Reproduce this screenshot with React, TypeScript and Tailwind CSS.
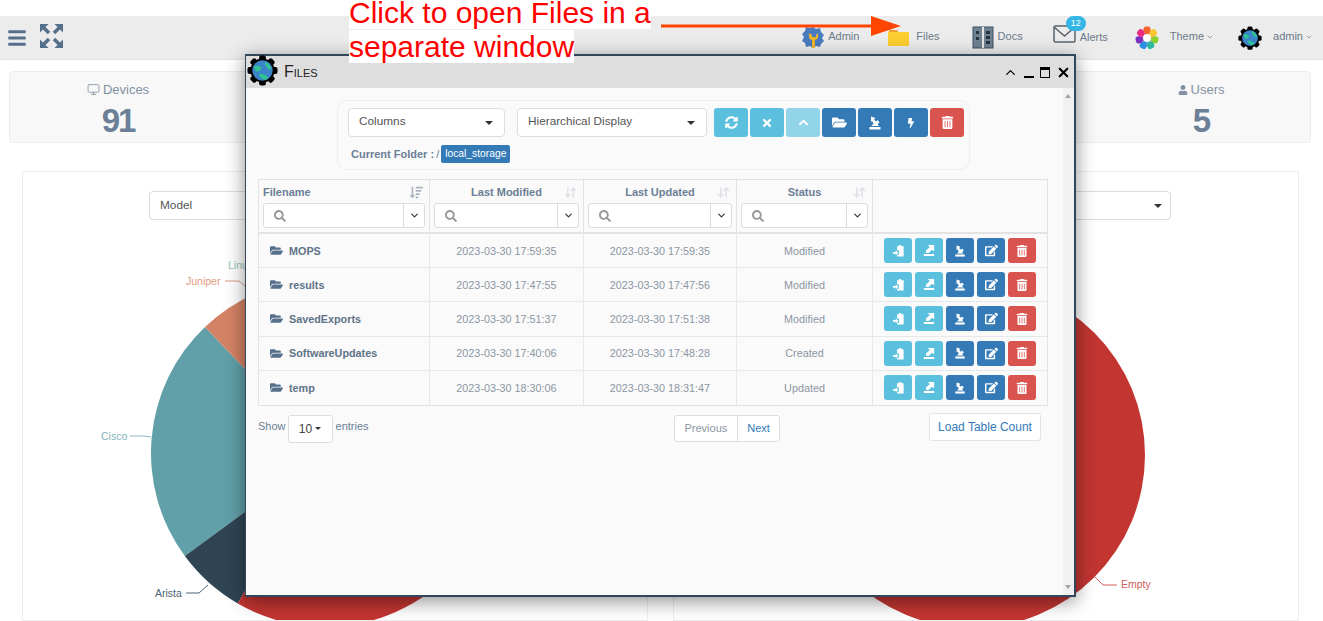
import React from "react";
import { ChevronDown, ChevronUp, Monitor, X, ArrowDownUp } from "lucide-react";
import { FaFolderOpen, FaTrashAlt, FaSyncAlt, FaTimes, FaChevronUp, FaBolt, FaEdit, FaUser, FaBars, FaSearch, FaSortAmountDown } from "react-icons/fa";

const font = "font-['Liberation_Sans',Arial,sans-serif]";

function Gear({ size = 32 }: { size?: number }) {
  const teeth = [0, 45, 90, 135, 180, 225, 270, 315];
  return (
    <svg width={size} height={size} viewBox="0 0 32 32">
      {teeth.map((a) => (
        <rect key={a} x="12.5" y="0.5" width="7" height="7" rx="2" fill="#000" transform={`rotate(${a} 16 16)`} />
      ))}
      <circle cx="16" cy="16" r="12.500" fill="#000" />
      <circle cx="16" cy="16" r="10.500" fill="#3b84c9" />
      <path d="M7.500 11c3 0 6 0 7 2s-2 4-4 4-3-3-3-6zM19 7c2 1 6 3 6 8-2 0-4-1-5-3s-2-3-1-5zM12 20c2-1 5 0 7 1s3 2 2 4c-3 1-6 0-9-5z" fill="#2fc48f" />
    </svg>
  );
}

function NavItem({ icon, label, caret, className = "" }: { icon: React.ReactNode; label: string; caret?: boolean; className?: string }) {
  return (
    <div className={`flex items-center text-[11px] text-[#6b7a8a] ${className}`}>
      {icon}
      <span className="-mt-[2px]">{label}</span>
      {caret && <ChevronDown size={8} className="ml-[2px] -mt-[2px]" />}
    </div>
  );
}

function Stat({ icon, label, value, className = "" }: { icon: React.ReactNode; label: string; value: string; className?: string }) {
  return (
    <div className={`flex flex-col items-center pt-[9px] text-[#6b7f96] ${className}`}>
      <div className="flex items-center gap-[3px] text-[13px] leading-[17px] text-[#8291a3]">
        {icon}
        {label}
      </div>
      <div className="text-[33px] leading-[34px] font-bold mt-[6px] tracking-[-2px]">{value}</div>
    </div>
  );
}

function SelectBox({ label, className = "" }: { label: string; className?: string }) {
  return (
    <div className={`h-[29px] shrink-0 bg-white border border-[#dddddd] rounded flex items-center justify-between pl-[10px] pr-[11px] text-[11.800px] text-[#555] ${className}`}>
      <span className="-mt-[2px]">{label}</span>
      <span className="w-0 h-0 border-x-[4px] border-x-transparent border-t-[4px] border-t-[#333]" />
    </div>
  );
}

function ToolBtn({ color, children }: { color: string; children: React.ReactNode }) {
  return <div className={`w-[34px] h-[29px] shrink-0 rounded-[3px] flex items-center justify-center text-white ${color}`}>{children}</div>;
}

function ImportIcon({ size = 12 }: { size?: number }) {
  return (
    <svg width={size} height={size} viewBox="0 0 14 14" fill="#fff">
      <path d="M1.500 11h11v2.500h-11z" />
      <polygon points="3,0.500 7.500,2 6,3.500 8,5.500 9.500,4 11.500,6.500 9.500,8 11,10 3.500,10 5.500,7.500 4,5 3,6" />
    </svg>
  );
}
function ExportIcon() {
  return (
    <svg width="12" height="13" viewBox="0 0 14 14" fill="#fff">
      <path d="M1 11h12v2.500H1zM5.500 0.500h7.500v7.500l-2.500-2-4 4H3.500v-3l4.500-4z" />
    </svg>
  );
}
function PasteIcon() {
  return (
    <svg width="13" height="13" viewBox="0 0 14 14" fill="#fff">
      <path d="M5.500 2.500h1.500L8 1h1.500l1 1.500h2V13.500H5.500V11.500H7.500V7H5.500z" />
      <path d="M1 8.500h3V7l3 2.500L4 12v-1.500H1z" />
    </svg>
  );
}

function ExpandIcon() {
  const transforms = ["", "translate(23 0) scale(-1 1)", "translate(0 24) scale(1 -1)", "translate(23 24) scale(-1 -1)"];
  return (
    <svg width="23" height="24" viewBox="0 0 23 24" fill="#56708c">
      {transforms.map((t, i) => (
        <path key={i} d="M0 0h8.500L0 8.500z" transform={t} />
      ))}
      {transforms.map((t, i) => (
        <path key={`l${i}`} d="M3 3l6 6" transform={t} stroke="#56708c" strokeWidth="3.500" fill="none" />
      ))}
    </svg>
  );
}

function FlowerIcon() {
  const petals: [number, string][] = [
    [0, "#f4652a"],
    [51, "#fbc531"],
    [103, "#8ccf2e"],
    [154, "#2bb7a0"],
    [206, "#2a8fe0"],
    [257, "#7b2fc0"],
    [309, "#ea2b7f"],
  ];
  return (
    <svg width="24" height="24" viewBox="0 0 24 24" className="mr-[11px]">
      {petals.map(([a, c]) => (
        <rect key={a} x="8.500" y="0.500" width="7" height="10" rx="2.500" fill={c} transform={`rotate(${a} 12 12)`} />
      ))}
      <circle cx="12" cy="12" r="6.500" fill="#f3a0c0" />
      {petals.map(([a, c]) => (
        <path key={`w${a}`} d="M12 12L9 5h6z" fill={c} transform={`rotate(${a} 12 12)`} />
      ))}
      <circle cx="12" cy="12" r="4" fill="#fff" />
    </svg>
  );
}

function HeaderCell({ label, left, className = "" }: { label: string; left?: boolean; className?: string }) {
  return (
    <div className={`border-r border-[#e3e3e3] px-[4px] pt-[4px] ${className}`}>
      <div className={`relative h-[17px] text-[11px] font-bold text-[#6b7f96] leading-[17px] ${left ? "text-left" : "text-center"}`}>
        {label}
        <span className={`absolute right-[2px] top-[2px] ${left ? "text-[#a9b4c0]" : "text-[#dfe3e8]"}`}>
          {left ? <FaSortAmountDown size={13} /> : <ArrowDownUp size={13} strokeWidth={3} />}
        </span>
      </div>
      <div className="mt-[2px] h-[25px] bg-white border border-[#dcdcdc] rounded-[3px] flex">
        <div className="flex-1 flex items-center pl-[10px] text-[#999]">
          <FaSearch size={12} />
        </div>
        <div className="w-[21px] border-l border-[#dcdcdc] flex items-center justify-center text-[#333]">
          <ChevronDown size={11} strokeWidth={2.5} />
        </div>
      </div>
    </div>
  );
}

const rows = [
  ["MOPS", "2023-03-30 17:59:35", "2023-03-30 17:59:35", "Modified"],
  ["results", "2023-03-30 17:47:55", "2023-03-30 17:47:56", "Modified"],
  ["SavedExports", "2023-03-30 17:51:37", "2023-03-30 17:51:38", "Modified"],
  ["SoftwareUpdates", "2023-03-30 17:40:06", "2023-03-30 17:48:28", "Created"],
  ["temp", "2023-03-30 18:30:06", "2023-03-30 18:31:47", "Updated"],
];

const cols = "grid grid-cols-[171px_154px_153px_136px_175px]";

function FilesWindow() {
  return (
    <div className="absolute left-[245px] top-[54px] w-[831px] h-[543px] border-2 border-[#32475a] border-l-[1px] bg-[#fafafa] shadow-[0_4px_18px_rgba(0,0,0,0.45)] z-10 flex flex-col">
      <div className="h-[32px] bg-[#dedede] flex items-center relative shrink-0">
        <span className="ml-[38px] text-[16px] text-[#222] [font-variant:small-caps]">Files</span>
        <div className="ml-auto mr-[3px] flex items-center gap-[6px] text-black">
          <ChevronUp size={15} strokeWidth={2} />
          <span className="w-[10px] h-[2px] bg-black mt-[9px]" />
          <span className="w-[10px] h-[11px] border border-black border-t-[3px]" />
          <X size={15} strokeWidth={3.500} />
        </div>
      </div>
      <div className="absolute left-[1px] top-[-1px] z-20">
        <Gear size={31} />
      </div>
      <div className="flex-1 flex min-h-0">
        <div className="flex-1 px-[12px] pt-[12px]">
          <div className="ml-[79px] w-[633px] h-[70px] border border-[#eeeeee] rounded-[10px] pl-[10px] pt-[7px]">
            <div className="flex">
              <SelectBox label="Columns" className="w-[157px]" />
              <SelectBox label="Hierarchical Display" className="w-[190px] ml-[12px]" />
              <div className="flex gap-[2px] ml-[7px] shrink-0">
                <ToolBtn color="bg-[#5bc0de]"><FaSyncAlt size={13} /></ToolBtn>
                <ToolBtn color="bg-[#5bc0de]"><FaTimes size={12} /></ToolBtn>
                <ToolBtn color="bg-[#92d5e9]"><FaChevronUp size={11} /></ToolBtn>
                <ToolBtn color="bg-[#337ab7]"><FaFolderOpen size={15} /></ToolBtn>
                <ToolBtn color="bg-[#337ab7]"><ImportIcon size={14} /></ToolBtn>
                <ToolBtn color="bg-[#337ab7]"><FaBolt size={10} /></ToolBtn>
                <ToolBtn color="bg-[#d9534f]"><FaTrashAlt size={13} /></ToolBtn>
              </div>
            </div>
            <div className="flex items-center mt-[8px] ml-[3px] text-[11px] font-bold text-[#6b7f96]">
              <span>Current Folder :</span>
              <span className="ml-[2px] font-normal">/</span>
              <span className="ml-[2px] px-[4px] h-[18px] leading-[18px] text-[10.300px] bg-[#337ab7] text-white font-normal rounded-[2px]">local_storage</span>
            </div>
          </div>

          <div className="mt-[9px] w-[790px] border border-[#e3e3e3]">
            <div className={`${cols} h-[54px] border-b-2 border-[#e3e3e3]`}>
              <HeaderCell label="Filename" left />
              <HeaderCell label="Last Modified" />
              <HeaderCell label="Last Updated" />
              <HeaderCell label="Status" />
              <div />
            </div>
            {rows.map((r, i) => (
              <div key={r[0]} className={`${cols} h-[34.200px] text-[10.800px] items-stretch ${i < 4 ? "border-b border-[#e8e8e8]" : ""}`}>
                <div className="flex items-center pl-[11px] gap-[6px] font-bold text-[#5f7388] border-r border-[#e8e8e8]">
                  <FaFolderOpen size={13} className="text-[#56708c]" />
                  {r[0]}
                </div>
                <div className="flex items-center justify-center text-[#8b96a3] border-r border-[#e8e8e8]">{r[1]}</div>
                <div className="flex items-center justify-center text-[#8b96a3] border-r border-[#e8e8e8]">{r[2]}</div>
                <div className="flex items-center justify-center text-[#8b96a3] border-r border-[#e8e8e8]">{r[3]}</div>
                <div className="flex items-center pl-[11px] gap-[3px]">
                  {[
                    ["bg-[#5bc0de]", <PasteIcon key="p" />],
                    ["bg-[#5bc0de]", <ExportIcon key="e" />],
                    ["bg-[#337ab7]", <ImportIcon key="i" />],
                    ["bg-[#337ab7]", <FaEdit key="ed" size={13} />],
                    ["bg-[#d9534f]", <FaTrashAlt key="t" size={12} />],
                  ].map(([c, ic], j) => (
                    <div key={j} className={`w-[28px] h-[25px] rounded-[3px] flex items-center justify-center text-white ${c}`}>{ic}</div>
                  ))}
                </div>
              </div>
            ))}
          </div>

          <div className="relative h-[40px] w-[790px] mt-[5px] text-[11px] text-[#6b7f96]">
            <div className="flex items-start">
              <span className="mt-[7px]">Show</span>
              <div className="ml-[2px] mr-[3px] w-[45px] h-[28px] mt-[4px] bg-white border border-[#dddddd] rounded-[3px] flex items-center justify-center text-[12px] text-[#444] gap-[3px]">
                10
                <span className="w-0 h-0 border-x-[3px] border-x-transparent border-t-[3px] border-t-[#333]" />
              </div>
              <span className="mt-[7px]">entries</span>
            </div>
            <div className="absolute left-[416px] top-[4px] flex h-[27px] bg-white border border-[#dddddd] rounded-[3px]">
              <span className="px-[9.500px] leading-[25px] text-[#8b96a3] border-r border-[#dddddd]">Previous</span>
              <span className="px-[9.500px] leading-[25px] text-[#337ab7]">Next</span>
            </div>
            <div className="absolute right-[7px] top-[2px] w-[112px] h-[28px] bg-white border border-[#e3e3e3] rounded-[3px] flex items-center justify-center text-[12px] text-[#337ab7]">
              Load Table Count
            </div>
          </div>
        </div>
        <div className="w-[11px] bg-[#f1f1f1] relative shrink-0">
          <span className="absolute left-[2px] top-[6px] w-0 h-0 border-x-[3px] border-x-transparent border-b-[4px] border-b-[#a3a3a3]" />
          <span className="absolute left-[2px] bottom-[6px] w-0 h-0 border-x-[3px] border-x-transparent border-t-[4px] border-t-[#a3a3a3]" />
        </div>
      </div>
    </div>
  );
}

function polar(cx: number, cy: number, r: number, x: number, y: number) {
  const d = Math.hypot(x - cx, y - cy);
  return [cx + ((x - cx) / d) * r, cy + ((y - cy) / d) * r];
}

function LeftPie() {
  const cx = 302, cy = 281, r = 174;
  const p1 = polar(cx, cy, r, 181, 154);
  const p2 = polar(cx, cy, r, 162, 384);
  const p3 = polar(cx, cy, r, 214, 433);
  const p4 = polar(cx, cy, r, 320, 105);
  const sector = (a: number[], b: number[], large = 0) => `M${cx} ${cy}L${a[0]} ${a[1]}A${r} ${r} 0 ${large} 0 ${b[0]} ${b[1]}Z`;
  return (
    <svg className="absolute inset-0" width="626" height="450" viewBox="0 0 626 450">
      <path d={sector(p1, p2)} fill="#61a0a8" />
      <path d={sector(p2, p3)} fill="#2f4554" />
      <path d={sector(p3, p4, 1)} fill="#c23531" />
      <path d={sector(p4, p1)} fill="#d48265" />
      <g fontSize="10.500" fontFamily="Liberation Sans, Arial, sans-serif">
        <text x="78" y="268" fill="#7fb3ba">Cisco</text>
        <path d="M107 264h14l7 1" stroke="#8fbcc2" fill="none" />
        <text x="163" y="113" fill="#e09a80">Juniper</text>
        <path d="M202 109h14l6 5" stroke="#dc9a80" fill="none" />
        <text x="205" y="97" fill="#91c7ae">Linux</text>
        <text x="132" y="425" fill="#4d6373">Arista</text>
        <path d="M163 421h13l9-8" stroke="#4d6373" fill="none" />
      </g>
    </svg>
  );
}

function RightPie() {
  return (
    <svg className="absolute inset-0" width="626" height="450" viewBox="0 0 626 450">
      <circle cx="298" cy="283" r="173" fill="#c23531" />
      <text x="447" y="416" fontSize="10.500" fontFamily="Liberation Sans, Arial, sans-serif" fill="#d2605c">Empty</text>
      <path d="M421 405l8 8h14" stroke="#d2605c" fill="none" />
    </svg>
  );
}

export default function App() {
  return (
    <div className={`relative w-[1323px] h-[621px] overflow-hidden bg-white ${font}`}>
      <div className="h-[16px]" />
      <header className="h-[44px] bg-[#ececec] border-b border-[#e4e4e4] flex items-center relative">
        <div className="ml-[7px] text-[#56708c]"><FaBars size={20} /></div>
        <div className="ml-[13px] -mt-[3px]"><ExpandIcon /></div>
        <div className="ml-auto flex items-center">
          <NavItem
            icon={
              <svg width="22" height="24" viewBox="0 0 22 24" className="mr-[4px]">
                <path d="M11 1l3 2 4-1 1 4 3 3-2 3 2 3-3 3-1 3-4-1-3 2-3-2-4 1-1-4-3-2 2-4-2-3 3-3 1-4 4 1z" fill="#4a7bbf" />
                <path d="M7 7v4c0 2 2 3 3 3v8h3v-8c1 0 3-1 3-3V7l-2 2v2h-4V9z" fill="#f0b429" />
              </svg>
            }
            label="Admin"
            className="mr-[29px]"
          />
          <NavItem
            icon={
              <svg width="22" height="20" viewBox="0 0 22 20" className="mr-[6px]">
                <path d="M1 2h8l2 3H1z" fill="#f0a030" />
                <rect x="0" y="4" width="21" height="14" rx="1" fill="#fbcf2f" />
              </svg>
            }
            label="Files"
            className="mr-[32px]"
          />
          <NavItem
            icon={
              <svg width="22" height="23" viewBox="0 0 22 23" className="mr-[4px]">
                <rect x="1" y="1" width="20" height="21" fill="#6f8291" stroke="#3f5060" />
                <rect x="10" y="1" width="2" height="21" fill="#e6e6e6" />
                <path d="M4 5h3v3H4zM4 11h3v3H4zM14 5h4v3h-4zM14 10h4v3h-4zM14 15h4v3h-4z" fill="#263440" />
              </svg>
            }
            label="Docs"
            className="mr-[30px]"
          />
          <div className="relative flex items-center text-[11px] text-[#6b7a8a] mr-[27px]">
            <svg width="23" height="18" viewBox="0 0 23 18" className="mr-[4px] -mt-[8px]">
              <rect x="1" y="1" width="21" height="16" rx="1.500" fill="none" stroke="#59636c" strokeWidth="1.500" />
              <path d="M1 2l10.500 9L22 2" fill="none" stroke="#59636c" strokeWidth="1.500" />
            </svg>
            <span>Alerts</span>
            <span className="absolute left-[13px] -top-[13px] w-[20px] h-[15px] rounded-full bg-[#33b5e5] text-white text-[9px] leading-[15px] text-center">12</span>
          </div>
          <NavItem icon={<FlowerIcon />} label="Theme" caret className="mr-[24px]" />
          <NavItem icon={<span className="mr-[11px] flex"><Gear size={24} /></span>} label="admin" caret className="mr-[10px]" />
        </div>
      </header>

      <div className="h-[72px] mt-[11px] ml-[9px] mr-[12px] bg-[#f8f8f8] border border-[#ececec] rounded flex justify-between">
        <Stat icon={<Monitor size={13} strokeWidth={1.5} />} label="Devices" value="91" className="w-[216px]" />
        <Stat icon={<FaUser size={10} />} label="Users" value="5" className="w-[218px]" />
      </div>

      <div className="mt-[28px] ml-[22px] mr-[24px] grid grid-cols-2 gap-[25px]">
        <div className="relative h-[450px] border border-[#eeeeee] overflow-hidden">
          <div className="absolute left-[126px] top-[19px] w-[200px] h-[29px] bg-white border border-[#dddddd] rounded text-[11.800px] text-[#555] pl-[10px] leading-[27px] z-[1]">Model</div>
          <LeftPie />
        </div>
        <div className="relative h-[450px] border border-[#eeeeee] overflow-hidden">
          <div className="absolute right-[127px] top-[19px] w-[200px] h-[29px] bg-white border border-[#dddddd] rounded flex items-center justify-end pr-[8px] z-[1]">
            <span className="w-0 h-0 border-x-[4px] border-x-transparent border-t-[4px] border-t-[#333]" />
          </div>
          <RightPie />
        </div>
      </div>

      <FilesWindow />

      <div className="absolute left-[349px] -top-[4px] z-20 w-[310px] text-[30px] leading-[34px] text-[#ff0000]">
        <span className="bg-white">Click to open Files in a separate window</span>
      </div>
      <svg className="absolute left-[660px] top-[15px] z-20" width="245" height="24" viewBox="0 0 245 24">
        <path d="M1 11h211" stroke="#ff4500" strokeWidth="3" />
        <path d="M211 1l30 10-30 10z" fill="#ff4500" />
      </svg>
    </div>
  );
}
